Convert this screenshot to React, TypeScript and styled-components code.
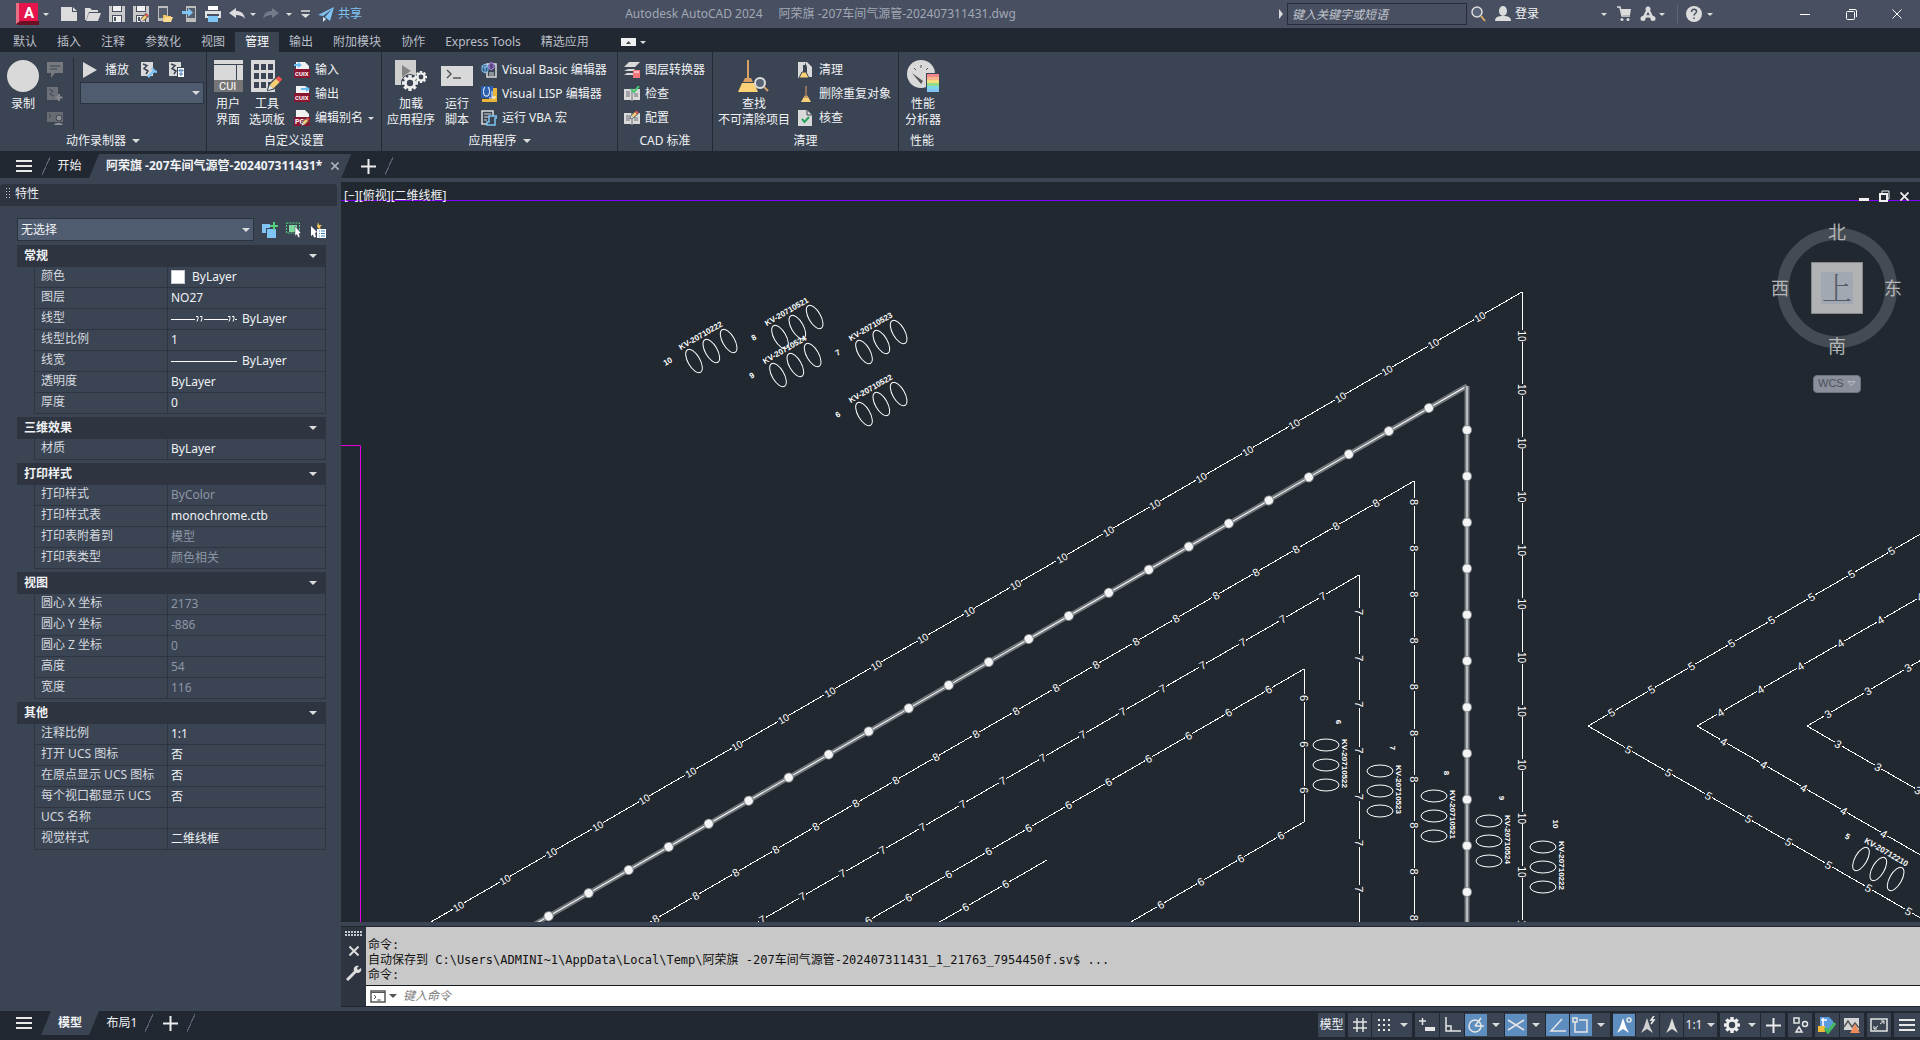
import React, { useState } from "react";
import styled, { createGlobalStyle, css } from "styled-components";

const c = {
  title: "#474f61",
  dark: "#222832",
  canvas: "#212830",
  panel: "#3b4453",
  header: "#2e3440",
  field: "#4f5b6e",
  text: "#f0f2f5",
  dim: "#8d96a5",
  icon: "#dcdcdc",
  active: "#5e8dc0",
  blue: "#7fc4f5",
};

const Global = createGlobalStyle`
  * { box-sizing: border-box; }
  body {
    margin: 0;
    overflow: hidden;
    background: ${c.dark};
    color: ${c.text};
    font: 12px/16px "Noto Sans", "Noto Sans CJK SC", sans-serif;
  }
  button, input, select { font: inherit; color: inherit; }
  button { border: 0; padding: 0; background: none; }
  svg { display: block; flex: none; }
`;

const Screen = styled.div`
  display: flex;
  flex-direction: column;
  height: 100vh;
`;

const Caret = styled.span<{ $size?: number }>`
  flex: none;
  width: 0;
  height: 0;
  border: ${(p) => p.$size ?? 3}px solid transparent;
  border-top-color: ${c.icon};
  border-bottom-width: 0;
`;

/* ---------- title bar ---------- */

const TitleBar = styled.header`
  display: grid;
  grid-template-columns: auto 1fr auto;
  align-items: center;
  height: 28px;
  background: ${c.title};
`;

const QuickAccess = styled.div`
  display: flex;
  align-items: center;
  padding-left: 14px;
`;

const ToolButton = styled.button<{ $w: number }>`
  display: flex;
  align-items: center;
  justify-content: center;
  width: ${(p) => p.$w}px;
  height: 24px;
`;

const ShareButton = styled.button`
  display: flex;
  align-items: center;
  gap: 4px;
  padding-left: 6px;
  color: ${c.blue};
`;

const WindowTitle = styled.h1`
  display: flex;
  justify-content: center;
  gap: 16px;
  margin: 0;
  font-size: 12px;
  font-weight: 400;
  line-height: 16px;
  color: #a2a8b3;
`;

const TitleRight = styled.div`
  display: flex;
  align-items: center;
  justify-content: flex-end;
`;

const Search = styled.input`
  width: 180px;
  height: 22px;
  margin: 0 4px;
  padding: 0 4px;
  border: 1px solid #262c38;
  background: ${c.title};
  font-style: italic;
  &::placeholder { color: #c3c7ce; }
`;

const SignIn = styled.button`
  display: flex;
  align-items: center;
  gap: 4px;
  width: 112px;
  margin-left: 8px;
  & > ${Caret} { margin-left: auto; }
`;

const Rule = styled.span`
  width: 1px;
  height: 18px;
  margin: 0 8px;
  background: #5a657a;
`;

const WindowButtons = styled.div`
  display: flex;
  margin-left: 64px;
`;

/* ---------- ribbon ---------- */

const RibbonTabs = styled.nav`
  display: flex;
  align-items: flex-end;
  height: 24px;
  padding-left: 3px;
  background: ${c.dark};
`;

const RibbonTab = styled.button<{ $on?: boolean }>`
  height: 20px;
  padding: 0 10px;
  color: ${(p) => (p.$on ? "#fff" : "#b9bec7")};
  background: ${(p) => (p.$on ? c.panel : "none")};
`;

const RibbonToggle = styled.button`
  display: flex;
  align-items: center;
  gap: 4px;
  height: 20px;
  margin-left: 22px;
`;

const Ribbon = styled.div`
  display: flex;
  height: 99px;
  background: ${c.panel};
`;

const Panel = styled.section<{ $w: number }>`
  display: flex;
  flex-direction: column;
  flex: none;
  width: ${(p) => p.$w}px;
  border-right: 1px solid #232a36;
  &:last-child { border-right: 0; }
`;

const PanelBody = styled.div`
  display: flex;
  flex: 1;
  padding: 6px 2px 0 5px;
`;

const PanelTitle = styled.h2`
  display: flex;
  align-items: center;
  justify-content: center;
  gap: 6px;
  height: 19px;
  margin: 0;
  padding-bottom: 2px;
  font-size: 12px;
  font-weight: 400;
`;

const BigButton = styled.button<{ $w: number }>`
  display: flex;
  flex-direction: column;
  align-items: center;
  flex: none;
  width: ${(p) => p.$w}px;
  height: 74px;
  padding-top: 2px;
  line-height: 16px;
  white-space: pre-line;
  & > svg { margin-bottom: 4px; }
`;

const Stack = styled.div<{ $left?: number }>`
  display: flex;
  flex-direction: column;
  margin-left: ${(p) => p.$left ?? 0}px;
`;

const RowButton = styled.button<{ $gap?: number }>`
  display: flex;
  align-items: center;
  gap: ${(p) => p.$gap ?? 5}px;
  height: 24px;
  white-space: nowrap;
`;

const RecorderSide = styled.div`
  display: flex;
  flex-direction: column;
  flex: 1;
  margin-left: 10px;
  padding-left: 6px;
  border-left: 1px solid #262d39;
  height: 72px;
`;

const RecorderTools = styled.div`
  display: flex;
  align-items: center;
  gap: 12px;
  padding-left: 3px;
`;

const SelectBox = styled.label<{ $h: number }>`
  display: grid;
  grid-template-columns: 1fr auto;
  align-items: center;
  height: ${(p) => p.$h}px;
  border: 1px solid #2b3240;
  background: ${c.field};
  & > select {
    grid-area: 1 / 1 / 2 / 3;
    width: 100%;
    height: 100%;
    padding: 0 3px;
    border: 0;
    appearance: none;
    background: none;
  }
  & > ${Caret} {
    grid-area: 1 / 2;
    margin-right: 3px;
    pointer-events: none;
  }
`;

/* ---------- document tabs ---------- */

const TabStrip = styled.nav`
  display: flex;
  align-items: center;
  background: ${c.dark};
`;

const DocumentTabs = styled(TabStrip)`
  height: 27px;
  padding-top: 3px;
`;

const LayoutTabs = styled(TabStrip)`
  align-self: flex-start;
`;

const StripButton = styled.button<{ $w: number }>`
  display: flex;
  align-items: center;
  justify-content: center;
  width: ${(p) => p.$w}px;
  height: 24px;
`;

const MenuButton = styled(StripButton)`
  padding-left: 6px;
`;

const Slash = styled.span`
  width: 8px;
  height: 18px;
  background: linear-gradient(to bottom right, transparent 46%, #56606f 46%, #56606f 54%, transparent 54%);
`;

const ActiveTab = styled.div<{ $pad: string }>`
  display: flex;
  align-items: center;
  gap: 9px;
  height: 24px;
  padding: ${(p) => p.$pad};
  background: ${c.panel};
  clip-path: polygon(10px 0, 100% 0, calc(100% - 10px) 100%, 0 100%);
  font-weight: 700;
  white-space: nowrap;
`;

/* ---------- work area ---------- */

const Work = styled.main`
  display: grid;
  grid-template-columns: 337px 1fr;
  column-gap: 4px;
  flex: 1;
  min-height: 0;
  padding: 4px 0;
  background: ${c.panel};
`;

const Palette = styled.aside`
  padding-top: 2px;
`;

const PaletteTitle = styled.h2`
  display: flex;
  align-items: center;
  gap: 3px;
  height: 22px;
  margin: 0 0 12px;
  padding: 0 0 2px 6px;
  border-radius: 4px 4px 0 0;
  background: ${c.header};
  font-size: 12px;
  font-weight: 400;
`;

const SelectionBar = styled.div`
  display: grid;
  grid-template-columns: 1fr auto auto auto;
  align-items: center;
  column-gap: 8px;
  margin: 0 11px 4px 17px;
`;

const Group = styled.section`
  margin: 0 11px 3px 17px;
`;

const GroupHead = styled.button`
  display: flex;
  align-items: center;
  justify-content: space-between;
  width: 100%;
  height: 22px;
  padding: 0 9px 1px 7px;
  background: ${c.header};
  font-weight: 700;
`;

const PropTable = styled.table`
  width: calc(100% - 17px);
  margin-left: 17px;
  table-layout: fixed;
  border-spacing: 0;
  border-left: 1px solid ${c.header};
  border-right: 1px solid ${c.header};
  th, td {
    height: 21px;
    padding: 0;
    border-bottom: 1px solid ${c.header};
    font-weight: 400;
    text-align: left;
    white-space: nowrap;
  }
  th {
    width: 133px;
    padding: 0 0 3px 6px;
    border-right: 1px solid ${c.header};
    color: #d5d9df;
  }
`;

const Value = styled.td<{ $dim?: boolean }>`
  color: ${(p) => (p.$dim ? c.dim : c.text)};
  && { padding-left: 3px; }
`;

const Sample = styled.span`
  display: flex;
  align-items: center;
  gap: 5px;
`;

const Swatch = styled.span`
  width: 14px;
  height: 14px;
  margin-right: 2px;
  border: 1px solid #c9ccd1;
  background: #fff;
`;

const Right = styled.div`
  display: flex;
  flex-direction: column;
  gap: 4px;
  min-width: 0;
  min-height: 0;
`;

const Canvas = styled.section`
  position: relative;
  flex: 1;
  min-height: 0;
  overflow: hidden;
  background: ${c.canvas};
`;

const Drawing = styled.svg`
  position: absolute;
  inset: 0;
  width: 100%;
  height: 100%;
`;

const ViewBar = styled.div`
  position: relative;
  display: flex;
  justify-content: space-between;
  align-items: center;
  padding: 2px 10px 0 3px;
`;

const ViewButtons = styled.div`
  display: flex;
  gap: 8px;
`;

const Compass = styled.div`
  position: absolute;
  top: 36px;
  right: 16px;
  display: flex;
  flex-direction: column;
  align-items: center;
  gap: 17px;
`;

const Wcs = styled.button`
  display: flex;
  align-items: center;
  justify-content: space-between;
  width: 48px;
  height: 18px;
  padding: 0 4px 2px 4px;
  border: 1px solid #6d7280;
  border-radius: 4px;
  background: #8b8f9c;
  color: #4c505b;
  font: 11px/14px "Liberation Sans", sans-serif;
`;

const Command = styled.section`
  display: grid;
  grid-template-columns: 25px 1fr;
  border-top: 1px solid #20262f;
  border-bottom: 1px solid #20262f;
  background: ${c.header};
  font-family: "DejaVu Sans Mono", "Noto Sans CJK SC", monospace;
`;

const CommandSide = styled.div`
  display: flex;
  flex-direction: column;
  align-items: center;
  gap: 9px;
  padding-top: 4px;
  line-height: 10px;
`;

const History = styled.div`
  height: 59px;
  padding: 11px 2px 0;
  border-bottom: 1px solid #15181d;
  background: #c8c8c8;
  color: #111;
  line-height: 15px;
  white-space: pre;
`;

const Prompt = styled.label`
  display: flex;
  align-items: center;
  gap: 3px;
  height: 20px;
  padding-left: 4px;
  background: #fff;
  & > input {
    flex: 1;
    height: 18px;
    padding: 0 3px;
    border: 0;
    outline: 0;
    background: none;
    color: #222;
    font-style: italic;
  }
  & > input::placeholder { color: #7b7b7b; }
  & > ${Caret} { border-top-color: #555; }
`;

/* ---------- status bar ---------- */

const Status = styled.footer`
  display: flex;
  justify-content: space-between;
  height: 29px;
  background: ${c.dark};
`;

const StatusTools = styled.div`
  display: flex;
  align-items: flex-start;
  gap: 3px;
  padding-top: 2px;
`;

const ToolGroup = styled.div`
  display: flex;
  gap: 1px;
`;

const Split = styled.span`
  display: flex;
  background: ${c.panel};
`;

const StatusButton = styled.button<{ $w: number; $on?: boolean }>`
  display: flex;
  align-items: center;
  justify-content: center;
  gap: 5px;
  width: ${(p) => p.$w}px;
  height: 24px;
  background: ${c.panel};
  ${(p) =>
    p.$on &&
    css`
      height: 22px;
      margin: 1px 0;
      background: ${c.active};
    `}
`;

/* ---------- icons ---------- */

type IconProps = { w?: number; h?: number; box?: string; children: React.ReactNode };
const Icon = ({ w = 16, h = 16, box, children }: IconProps) => (
  <svg width={w} height={h} viewBox={box ?? `0 0 ${w} ${h}`} fill="none" aria-hidden="true">
    {children}
  </svg>
);

const Pencil = ({ x, y, s = 1 }: { x: number; y: number; s?: number }) => (
  <g transform={`translate(${x} ${y}) scale(${s})`}>
    <path d="M0 8 1 5 6 0 9 3 4 8 0 9Z" fill={c.panel} />
    <path d="M1.5 5.5 5 2 7 4 3.500 7.500Z" fill="#f7cf72" />
    <path d="M5 2 6.500.5 8.500 2.500 7 4Z" fill="#f0524f" />
    <path d="M.5 8.500 1.500 5.500 3.500 7.500Z" fill="#e8e8e8" />
  </g>
);

const Logo = () => (
  <Icon w={24} h={24}>
    <path d="M1 1h4v21H1z" fill="#e87084" />
    <path d="M1 22 5 19h19v4H3z" fill="#6c0f24" />
    <path d="M4 1h19v18H4z" fill="#e5144c" />
    <text x="9" y="16" fill="#fff" fontSize="15" fontWeight="700" fontFamily="Roboto, sans-serif">A</text>
  </Icon>
);
const NewIcon = () => <Icon w={18}><path d="M1 1h11v5h5v9H1z" fill={c.icon} /><path d="m13 1 4 4h-4z" fill={c.icon} /></Icon>;
const OpenIcon = () => <Icon><path d="M0 14V2h5l2 2h6v2H4L1 14z" fill={c.icon} /><path d="M4 7h12l-3 8H1z" fill={c.icon} /></Icon>;
const SaveIcon = ({ edit }: { edit?: boolean }) => (
  <Icon>
    <path d="M0 0h16v16H0z" fill="#c9c9c9" />
    <path d="M3 0h10v6H3zM3 9h10v7H3z" fill={c.title} />
    <path d="M4 0h8v5H4zM4 10h8v6H4z" fill="#f0f0f0" />
    <path d="M5 11h2v4H5z" fill={c.title} />
    {edit && <Pencil x={7} y={7} />}
  </Icon>
);
const WebOpenIcon = () => (
  <Icon><path d="M1 0h10v15H1z" fill="#bdbdbd" /><path d="M2 2h8v10H2z" fill="#555d6d" /><path d="M6 9h3l1 1h4v5H6z" fill="#f3c45f" /><path d="M8 11h8l-2 5H6z" fill="#fbdc92" /></Icon>
);
const WebSaveIcon = () => (
  <Icon><path d="M5 0h10v16H5z" fill="#bdbdbd" /><path d="M6 2h8v10H6z" fill="#555d6d" /><path d="M1 5h6V2l5 4.500L7 11V8H1z" fill={c.blue} /></Icon>
);
const PrintIcon = () => (
  <Icon><path d="M3 0h10v4H3z" fill="#fff" /><path d="M0 5h16v7H0z" fill="#e1e1e1" /><path d="M2 8h12v2H2z" fill={c.title} /><path d="M3 10h10v6H3z" fill={c.blue} /></Icon>
);
const UndoIcon = ({ flip, tone = c.icon }: { flip?: boolean; tone?: string }) => (
  <Icon>
    <path transform={flip ? "translate(16 0) scale(-1 1)" : undefined} d="M0 7 7 2v3c5 0 8 2 9 8-2-3-5-4-9-4v3z" fill={tone} />
  </Icon>
);
const PlaneIcon = () => <Icon><path d="M0 9 16 1 12 15 7 11 14 3 5 10z" fill={c.blue} /><path d="m5 11 3 2-3 3z" fill="#d5ecfb" /></Icon>;
const SearchIcon = () => <Icon><circle cx="6" cy="6" r="5" fill="#5a6478" stroke={c.icon} strokeWidth="1.500" /><path d="m10 10 4 5" stroke="#dfa862" strokeWidth="2" /></Icon>;
const UserIcon = () => <Icon><ellipse cx="8" cy="5" rx="4" ry="5" fill={c.icon} /><path d="M0 15c0-4 3-5 8-5s8 1 8 5z" fill={c.icon} /></Icon>;
const CartIcon = () => <Icon w={14}><path d="M0 1h3l2 9h8" stroke={c.icon} strokeWidth="1.500" /><path d="M4 3h10l-1 6H5z" fill={c.icon} /><circle cx="5" cy="13.500" r="1.500" fill={c.icon} /><circle cx="11" cy="13.500" r="1.500" fill={c.icon} /></Icon>;
const StoreIcon = () => <Icon><path d="M3 13 8 3l5 10M3 12c3-2 7-2 10 0" stroke={c.icon} strokeWidth="2.500" /><circle cx="8" cy="3" r="2.500" fill={c.icon} /><circle cx="3" cy="12.500" r="2.500" fill={c.icon} /><circle cx="13" cy="12.500" r="2.500" fill={c.icon} /></Icon>;
const HelpIcon = () => <Icon><circle cx="8" cy="8" r="8" fill={c.icon} /><path d="M5.500 6c0-4 5-3.500 5-.5 0 2-2.500 2-2.500 4M8 11.500v1.500" stroke={c.title} strokeWidth="1.500" /></Icon>;
const Close = ({ s = 10, tone = "#fff", sw = 1 }: { s?: number; tone?: string; sw?: number }) => <Icon w={s} h={s} box="0 0 10 10"><path d="m0.500.5 9 9m0-9-9 9" stroke={tone} strokeWidth={sw} /></Icon>;
const Burger = () => <Icon w={16} h={12}><path d="M0 1h16M0 6h16M0 11h16" stroke="#e8e8e8" strokeWidth="2" /></Icon>;
const Plus = ({ s = 15 }: { s?: number }) => <Icon w={s} h={s} box="0 0 15 15"><path d="M0 7.500h15M7.500 0v15" stroke="#ececec" strokeWidth="2" /></Icon>;

const RecordIcon = () => <Icon w={32} h={32}><circle cx="16" cy="16" r="16" fill="#d9d9d9" /></Icon>;
const NoteIcon = () => <Icon><path d="M0 0h16v11H8l-4 5v-5H0z" fill="#77797e" /><path d="M3 4h10M3 7h7" stroke={c.panel} /></Icon>;
const MacroGhost = () => <Icon><path d="M0 1h11v13H0z" fill="#6d7077" /><path d="m2 3 4 2-3 3 4 2" stroke={c.panel} /><path d="M12 8v7M8.500 11.500h7" stroke="#85888e" strokeWidth="2" /></Icon>;
const PauseGhost = () => <Icon><path d="M0 2h16v10H0z" fill="#686b72" /><path d="m2 4 2 2-2 2" stroke={c.panel} /><circle cx="12" cy="8" r="3" fill="#8a8d92" stroke={c.panel} /><path d="M7 15c1-3 8-3 9 0z" fill="#8a8d92" /></Icon>;
const PlayIcon = () => <Icon w={14}><path d="m0 0 14 8L0 16z" fill="#d9d9d9" /></Icon>;
const MacroIcon = ({ kind }: { kind: "wrench" | "list" }) => (
  <Icon>
    <path d="M0 0h12v14H0z" fill="#d9d9d9" /><path d="m2 2 4 1.500-3 3L7 9l-2 3" stroke={c.panel} strokeWidth="1.500" />
    {kind === "wrench" ? (
      <path d="m7 15 6-6M11 6l2 3 3 1" stroke={c.blue} strokeWidth="2.500" />
    ) : (
      <><path d="M8 5h8v11H8z" fill={c.panel} /><path d="M9 6h6v9H9z" fill="#fff" /><path d="M10 8h4v1h-4zM12 10v4M10 12h4" stroke="#3f79b5" /></>
    )}
  </Icon>
);
const CuiIcon = () => (
  <Icon w={29} h={32}>
    <path d="M0 0h29v4H0zM0 5h22v15H0zM23 5h6v15h-6z" fill="#d9d9d9" /><path d="M0 20h29v12H0z" fill="#767676" />
    <text x="5" y="30" fontSize="11" fill="#fff" fontFamily="Roboto, sans-serif">CUI</text>
  </Icon>
);
const PaletteIcon = () => (
  <Icon w={32} h={32}>
    <path d="M0 0h24v32H0z" fill="#d9d9d9" />
    {[4, 13, 22].map((y) => [3, 10, 17].map((x) => <path key={`${x}${y}`} d={`M${x} ${y}h5v6h-5z`} fill={c.panel} />))}
    <Pencil x={16} y={15} s={1.8} />
  </Icon>
);
const CuixIcon = ({ kind }: { kind: "in" | "out" | "alias" }) => (
  <Icon>
    <path d="M2 0h9l4 4v12H2z" fill="#f1f1f1" /><path d="M0 7h16v9H0z" fill="#8a1530" />
    {kind === "alias" ? (
      <><text x="1" y="14" fontSize="7" fontWeight="700" fill="#fff" fontFamily="Roboto, sans-serif">PGP</text><Pencil x={7} y={7} /></>
    ) : (
      <text x="1" y="14" fontSize="6" fontWeight="700" fill="#fff" fontFamily="Roboto, sans-serif">CUIX</text>
    )}
    {kind === "in" && <path d="M0 2h4V0l4 3-4 3V4H0z" fill="#69bdf5" />}
    {kind === "out" && <path d="M7 2h5V0l4 3-4 3V4H7z" fill="#69bdf5" />}
  </Icon>
);
const Cog = ({ x, y, r, hole = c.panel }: { x: number; y: number; r: number; hole?: string }) => (
  <g transform={`translate(${x} ${y})`}>
    <circle r={r * 0.75} fill="#eee" />
    {[0, 45, 90, 135].map((a) => <path key={a} d={`M0 ${-r}V${r}`} stroke="#eee" strokeWidth={r * 0.42} transform={`rotate(${a})`} />)}
    <circle r={r * 0.4} fill={hole} />
  </g>
);
const LoadIcon = () => <Icon w={32} h={32}><path d="M0 0h21v25H0z" fill="#cfcfcf" /><path d="m7 5 9 6-9 6z" fill="#858585" /><circle cx="15" cy="23" r="9" fill={c.panel} /><Cog x={15} y={23} r={8} /><Cog x={26} y={17} r={6} /></Icon>;
const ScriptIcon = () => <Icon w={32} h={32}><path d="M0 6h32v20H0z" fill="#d9d9d9" /><path d="m6 10 4 4-4 4M12 18h8" stroke="#555" strokeWidth="1.500" /></Icon>;
const VbIcon = () => <Icon><path d="M6 2h9v13H6z" stroke="#ddd" strokeWidth="1.500" /><path d="M8 11h5M8 13h5" stroke="#ddd" /><path d="M1 4l3-2 3 2v5l-3 2-3-2zM4 2v9M1 4l3 2 3-2" stroke={c.blue} fill="#34567c" /><path d="M8 2l2-1.500L13 2v4l-3 2-2-2z" stroke="#b58bea" fill="#5d4a85" /></Icon>;
const LispIcon = () => <Icon><path d="M11 2h5v14H1v-3h10z" fill="#e9b53a" /><path d="M0 0h12v12H0z" fill="#2c5fb0" /><path d="M4 1c-2 2-2 7 0 9M7 1c2 2 2 7 0 9M4 10h3" stroke="#fff" /><path d="M11 5v6M11 11h4M8 12h6" stroke="#fff" /></Icon>;
const VbaIcon = () => <Icon><path d="M1 1h11v13H1z" stroke="#ddd" strokeWidth="1.500" /><path d="M3 4h7M3 7h6M3 10h3" stroke="#ddd" /><path d="M8 6h8v2h-2v7H6v-3h2z" stroke={c.blue} fill={c.panel} strokeWidth="1.500" /></Icon>;
const LayerIcon = () => <Icon><path d="m5 0h11l-5 5H0zM4 7h7l-2 2H0zM3 11h6v2H0z" fill="#d9d9d9" /><path d="M9 8h7v8H9z" fill="#f2777a" /><path d="M10 10h5" stroke="#fff" /></Icon>;
const Book = ({ check }: { check?: boolean }) => (
  <Icon><path d="M0 3h7l1 1 1-1h7v11H9l-1 1-1-1H0z" fill="#d9d9d9" /><path d="M2 6h4M2 8h4M2 10h4M10 8h4M10 10h4M8 4v10" stroke="#6b6f78" />
    {check ? <path d="m7 3 3 3 5-6" stroke="#46c66e" strokeWidth="2" /> : <Pencil x={6} y={0} />}
  </Icon>
);
const Broom = ({ w, h }: { w: number; h: number }) => <Icon w={w} h={h} box="0 0 20 32"><path d="M9 0h2v18H9z" fill="#d9a066" /><path d="M7 19h6l2 4H5z" fill="#d9a066" /><path d="M5 23h10l5 9H0z" fill="#fbd178" /></Icon>;
const FindBroom = () => <Icon w={32} h={32}><path d="M9 0h2v18H9z" fill="#d9a066" /><path d="M7 18h6l2 4H5z" fill="#d9a066" /><path d="M4 23h12l4 9H0z" fill="#fbd178" /><path d="m26 27 4 4" stroke="#d9a066" strokeWidth="2" /><circle cx="22" cy="23" r="5" fill="#5a6478" stroke="#ddd" strokeWidth="2" /></Icon>;
const PurgeIcon = () => <Icon><path d="M0 0h7v16H0zM7 0h2l5 5v10H9V5z" fill="#d9d9d9" /><path d="M5 3h3v7h-3z" fill={c.panel} /><path d="M4 10h4l3 6H1z" fill="#fbd178" stroke={c.panel} /></Icon>;
const AuditIcon = () => <Icon><path d="M0 0h9l5 5v11H0z" fill="#d9d9d9" /><path d="M9 0v5h5" stroke={c.panel} /><path d="m4 9 2.500 3L11 7" stroke="#2ba35a" strokeWidth="2" /></Icon>;
const GaugeIcon = () => (
  <Icon w={32} h={32}>
    <circle cx="14" cy="14" r="14" fill="#d9d9d9" />
    <path d="M14 5v3M7 8l2 2M21 8l-2 2" stroke="#555" /><path d="m5 13 11 8-2 3z" fill="#555" />
    <path d="M19 13h13v19H19z" fill={c.panel} />
    {["#f4878b", "#f8b58a", "#f4dc7c", "#8fdc8a", "#7fd6e8", "#7fc4f5"].map((f, i) => <path key={f} d={`M20 ${14 + i * 3}h12v3H20z`} fill={f} />)}
  </Icon>
);
const Grip = ({ cols, rows }: { cols: number; rows: number }) => (
  <Icon w={cols * 3} h={rows * 3}>
    {Array.from({ length: cols * rows }, (_, i) => <path key={i} d={`M${(i % cols) * 3} ${Math.floor(i / cols) * 3}h${cols > 3 ? 2 : 1}v${cols > 3 ? 2 : 1}h${cols > 3 ? -2 : -1}z`} fill="#c5c9d0" />)}
  </Icon>
);
const AddSelIcon = () => <Icon><path d="M0 2h8v9H0z" fill={c.blue} /><path d="M4 6h10v10H4z" fill={c.panel} /><path d="M5 7h9v9H5z" fill={c.blue} /><path d="M12 0v8M8 4h8" stroke="#52d07c" strokeWidth="2" /></Icon>;
const PickIcon = () => <Icon><path d="M.5 1h13v10H.5z" stroke="#52d07c" strokeDasharray="2 1" /><path d="M3 3h8v7H3z" fill="#7ddba0" /><path d="m9 4 6 7-2 .5 1 3.500-2 .5-1-3-2 1.500z" fill="#fff" stroke={c.panel} strokeWidth=".5" /></Icon>;
const QuickSelIcon = () => <Icon><path d="m8 0 1 3h3l-2 2 1 3-4-3z" fill="#f6c65b" /><path d="m1 4 6 6-2 1 1 4-2 .5-1-3-2 1.500z" fill="#fff" /><path d="M7 7h9v9H7z" fill="#fff" /><path d="M9 9h1m1 0h4M9 11.500h1m1 0h4M9 14h1m1 0h4" stroke="#3682c4" /></Icon>;
const WrenchIcon = () => <Icon><path d="m1 15 9-9" stroke="#ddd" strokeWidth="3" /><path d="M15 3 12 5 11 3l2-2c-4-1-6 2-5 5l3 2c3 0 5-2 4-5z" fill="#ddd" /></Icon>;
const PromptIcon = () => <Icon w={16} h={13}><path d="M1 1h14v11H1z" stroke="#555" strokeWidth="1.500" /><path d="M1 2.500h14" stroke="#555" /><path d="m4 5 2 2-2 2M7 10h4" stroke="#555" /></Icon>;

const S = ({ children }: { children: React.ReactNode }) => (
  <svg width={18} height={18} viewBox="0 0 18 18" fill="none" stroke="#e6e6e6" strokeWidth="1.500" aria-hidden="true">{children}</svg>
);
const statusIcon: Record<string, React.ReactNode> = {
  grid: <S><path d="M6 2v14M12 2v14M2 6h14M2 12h14" /></S>,
  snap: <S><path d="M3 4h12M3 9h12M3 14h12" strokeDasharray="2 3" strokeWidth="2" /></S>,
  input: <S><path d="M1 5h7M4.500 2v7" /><path d="M7 11h10v4H7z" fill="#e6e6e6" stroke="none" /></S>,
  ortho: <S><path d="M3 1v14h15M3 10h5v5" /></S>,
  polar: <S><circle cx="8" cy="10" r="6" /><path d="M8 10h9M8 10l6-8" /></S>,
  iso: <S><path d="m1 4 16 10M1 14 17 4" /></S>,
  track: <S><path d="M17 15H2L13 3" /></S>,
  osnap: <S><path d="M3 6v10h12V4H7" /><path d="M1 2h4v4H1z" /></S>,
  anno: <S><path d="m8 2 3 9 3 6-6-4-6 4 3-6z" fill="#fff" stroke="none" /><circle cx="14" cy="4" r="2" /></S>,
  auto: <S><path d="m8 2 3 9 3 6-6-4-6 4 3-6z" fill="#cfcfcf" stroke="none" /><path d="m15 0-3 4h3l-3 4" stroke="#eee" /></S>,
  person: <S><path d="m9 2 3 9 3 6-6-4-6 4 3-6z" fill="#dcdcdc" stroke="none" /></S>,
  shapes: <S><path d="M3 2h5v5H3z" /><circle cx="14" cy="8" r="2.500" /><path d="m8 11 3 5H5z" /></S>,
  monitor: <S><path d="M2 1h9l4 4v8H2z" fill="#5d9be0" stroke="none" /><path d="M3 4h6M5 2v8" stroke="#fff" /><path d="M0 10h7v6H0z" fill="#f2b93b" stroke="none" /><path d="m7 12 3 4 7-9" stroke="#43b85f" strokeWidth="3" /></S>,
  graph: <S><path d="M1 2h15v12H1z" fill="#d5d5d5" stroke="none" /><path d="m1 11 4-6 4 6 3-4 4 5" stroke="#555" /><path d="m12 8 5 9H7z" fill="#ee8d5b" stroke="none" /></S>,
  full: <S><path d="M1 3h16v12H1z" /><path d="m10 8 4-3M14 8V5h-3M8 10l-4 3M4 10v3h3" strokeWidth="1" /></S>,
  gear: <Icon w={18} h={18}><Cog x={9} y={9} r={8} /></Icon>,
  plus: <Plus />,
  burger: <Burger />,
};

/* ---------- drawing data ---------- */

type Pt = [number, number];

const RUN_STEP = 46.2;
const STROKE_FONT = '"Liberation Sans Narrow", "Liberation Sans", sans-serif';

/** A pipe run: a straight line interrupted by its size label at a fixed step. */
function Run({ from, angle, length, first, label, step = RUN_STEP, flip = 0 }: {
  from: Pt; angle: number; length: number; first: number; label: string; step?: number; flip?: number;
}) {
  const half = label.length > 1 ? 6 : 4;
  const marks: number[] = [];
  for (let d = first; d < length; d += step) marks.push(d);
  const stops = [-half, ...marks, length + half];
  return (
    <g transform={`translate(${from[0]} ${from[1]}) rotate(${angle})`}>
      {stops.slice(1).map((d, i) => (
        <line key={d} x1={stops[i] + half} x2={d - half} y1={0} y2={0} shapeRendering="crispEdges" />
      ))}
      {marks.map((d) => (
        <text key={d} transform={`translate(${d} 0) rotate(${flip})`} y={4} textAnchor="middle" fontSize={label.length > 1 ? 10 : 11} stroke="none">{label}</text>
      ))}
    </g>
  );
}

/** The picked run is drawn with a halo and a grip at each label. */
function PickedRun({ from, angle, length, first }: { from: Pt; angle: number; length: number; first: number }) {
  const marks: number[] = [];
  for (let d = first; d < length + 4; d += RUN_STEP) marks.push(d);
  return (
    <g transform={`translate(${from[0]} ${from[1]}) rotate(${angle})`}>
      <line x1={0} x2={length} y1={0} y2={0} stroke="#73787d" strokeWidth={5} />
      <line x1={0} x2={length} y1={0} y2={0} stroke="#fff" strokeWidth={1} />
      {marks.map((d) => (
        <g key={d} stroke="none">
          <circle cx={d} cy={0} r={5} fill="#8b9095" />
          <circle cx={d} cy={0} r={4} fill="#f4f4f4" />
        </g>
      ))}
    </g>
  );
}

/** Valve block: tag number, code, and three cylinders. */
function Valve({ at, angle, tag, code }: { at: Pt; angle: number; tag: string; code: string }) {
  return (
    <g transform={`translate(${at[0]} ${at[1]}) rotate(${angle})`}>
      {[0, 20, 40].map((x) => <ellipse key={x} cx={x} cy={0} rx={6} ry={13} />)}
      <g stroke="none" fill="#fff" fontSize={8} fontWeight={700}>
        <text x={-6} y={-16}>{code}</text>
        <text x={-23} y={-10} textAnchor="middle">{tag}</text>
      </g>
    </g>
  );
}

const valves: { at: Pt; angle: number; tag: string; code: string }[] = [
  { at: [694, 361], angle: -30, tag: "10", code: "KV-20710222" },
  { at: [780, 337], angle: -30, tag: "8", code: "KV-20710521" },
  { at: [778, 375], angle: -30, tag: "9", code: "KV-20710524" },
  { at: [864, 352], angle: -30, tag: "7", code: "KV-20710523" },
  { at: [864, 414], angle: -30, tag: "6", code: "KV-20710522" },
  { at: [1326, 745], angle: 90, tag: "6", code: "KV-20710522" },
  { at: [1380, 771], angle: 90, tag: "7", code: "KV-20710523" },
  { at: [1434, 796], angle: 90, tag: "8", code: "KV-20710521" },
  { at: [1489, 821], angle: 90, tag: "9", code: "KV-20710524" },
  { at: [1543, 847], angle: 90, tag: "10", code: "KV-20710222" },
  { at: [1861, 859], angle: 30, tag: "5", code: "KV-20712210" },
];

const runs: React.ComponentProps<typeof Run>[] = [
  { from: [1522, 292], angle: 150, length: 1260, first: 49, label: "10", step: 53.6, flip: 180 },
  { from: [1522, 292], angle: 90, length: 640, first: 44, label: "10", step: 53.6 },
  { from: [1414, 481], angle: 150, length: 890, first: 44, label: "8", flip: 180 },
  { from: [1414, 481], angle: 90, length: 450, first: 21, label: "8" },
  { from: [1359, 575], angle: 150, length: 710, first: 42, label: "7", flip: 180 },
  { from: [1359, 575], angle: 90, length: 360, first: 37, label: "7" },
  { from: [1304, 669], angle: 150, length: 520, first: 41, label: "6", flip: 180 },
  { from: [1304, 669], angle: 90, length: 153, first: 29, label: "6" },
  { from: [1304, 822], angle: 150, length: 210, first: 27, label: "6", flip: 180 },
  { from: [1047, 860], angle: 150, length: 140, first: 48, label: "6", flip: 180 },
  { from: [1588, 726], angle: -30, length: 400, first: 27, label: "5" },
  { from: [1588, 726], angle: 30, length: 400, first: 47, label: "5" },
  { from: [1697, 726], angle: -30, length: 270, first: 27, label: "4" },
  { from: [1697, 726], angle: 30, length: 270, first: 31, label: "4" },
  { from: [1807, 726], angle: -30, length: 140, first: 24, label: "3" },
  { from: [1807, 726], angle: 30, length: 140, first: 36, label: "3" },
];

const Plan = () => (
  <Drawing role="img" aria-label="管线平面图">
    <g transform="translate(-341 -182)" stroke="#fff" fill="none" fontFamily={STROKE_FONT}>
      <path d="M341 200.500H4000" stroke="#7f00ff" />
      <path d="M341 445.500H360.500V1400" stroke="#e000e0" />
      <g fill="#fff">
        {runs.map((r, i) => <Run key={i} {...r} />)}
      </g>
      <PickedRun from={[1467, 386]} angle={150} length={1085} first={44} />
      <PickedRun from={[1467, 386]} angle={90} length={550} first={44} />
      {valves.map((v, i) => <Valve key={i} {...v} />)}
    </g>
  </Drawing>
);

/* ---------- property data ---------- */

type Row = { name: string; value?: React.ReactNode; dim?: boolean };

const groups: { name: string; rows: Row[] }[] = [
  {
    name: "常规",
    rows: [
      { name: "颜色", value: <Sample><Swatch />ByLayer</Sample> },
      { name: "图层", value: "NO27" },
      {
        name: "线型",
        value: (
          <Sample>
            <Icon w={66} h={9}><path d="M0 4.500h24M33 4.500h24M64 4.500h2" stroke="#fff" /><path d="M25 1.500h2v2l-1 3M29 1.500h2v2l-1 3M57 1.500h2v2l-1 3M61 1.500h2v2l-1 3" stroke="#fff" /></Icon>
            ByLayer
          </Sample>
        ),
      },
      { name: "线型比例", value: "1" },
      { name: "线宽", value: <Sample><Icon w={66} h={3}><path d="M0 1.500h66" stroke="#fff" /></Icon>ByLayer</Sample> },
      { name: "透明度", value: "ByLayer" },
      { name: "厚度", value: "0" },
    ],
  },
  { name: "三维效果", rows: [{ name: "材质", value: "ByLayer" }] },
  {
    name: "打印样式",
    rows: [
      { name: "打印样式", value: "ByColor", dim: true },
      { name: "打印样式表", value: "monochrome.ctb" },
      { name: "打印表附着到", value: "模型", dim: true },
      { name: "打印表类型", value: "颜色相关", dim: true },
    ],
  },
  {
    name: "视图",
    rows: [
      { name: "圆心 X 坐标", value: "2173", dim: true },
      { name: "圆心 Y 坐标", value: "-886", dim: true },
      { name: "圆心 Z 坐标", value: "0", dim: true },
      { name: "高度", value: "54", dim: true },
      { name: "宽度", value: "116", dim: true },
    ],
  },
  {
    name: "其他",
    rows: [
      { name: "注释比例", value: "1:1" },
      { name: "打开 UCS 图标", value: "否" },
      { name: "在原点显示 UCS 图标", value: "否" },
      { name: "每个视口都显示 UCS", value: "否" },
      { name: "UCS 名称" },
      { name: "视觉样式", value: "二维线框" },
    ],
  },
];

type Tool = { id: string; label: string; w: number; on?: boolean; menu?: number };
const statusGroups: Tool[][] = [
  [{ id: "grid", label: "栅格", w: 23 }, { id: "snap", label: "捕捉", w: 24, menu: 16 }],
  [
    { id: "input", label: "动态输入", w: 24 },
    { id: "ortho", label: "正交", w: 24 },
    { id: "polar", label: "极轴追踪", w: 22, on: true, menu: 17 },
    { id: "iso", label: "等轴测草图", w: 22, on: true, menu: 18 },
    { id: "track", label: "对象捕捉追踪", w: 23, on: true },
    { id: "osnap", label: "对象捕捉", w: 22, on: true, menu: 18 },
  ],
];

const tabs = ["默认", "插入", "注释", "参数化", "视图", "管理", "输出", "附加模块", "协作", "Express Tools", "精选应用"];

function StatusTool({ id, label, w, on, menu }: Tool) {
  return (
    <Split>
      <StatusButton $w={w} $on={on} aria-label={label}>{statusIcon[id]}</StatusButton>
      {menu && <StatusButton $w={menu} aria-label={`${label}选项`}><Caret $size={4} /></StatusButton>}
    </Split>
  );
}

function PropGroup({ name, rows }: { name: string; rows: Row[] }) {
  const [open, setOpen] = useState(true);
  return (
    <Group>
      <GroupHead aria-expanded={open} onClick={() => setOpen(!open)}>
        {name}
        <Caret $size={4} />
      </GroupHead>
      {open && (
        <PropTable>
          <tbody>
            {rows.map((r) => (
              <tr key={r.name}>
                <th scope="row">{r.name}</th>
                <Value $dim={r.dim}>{r.value}</Value>
              </tr>
            ))}
          </tbody>
        </PropTable>
      )}
    </Group>
  );
}

function Title() {
  return (
    <TitleBar>
      <QuickAccess>
        <ToolButton $w={26} aria-label="应用程序菜单"><Logo /></ToolButton>
        <ToolButton $w={12} aria-label="更多"><Caret /></ToolButton>
        <ToolButton $w={34} aria-label="新建"><NewIcon /></ToolButton>
        <ToolButton $w={14} aria-label="打开"><OpenIcon /></ToolButton>
        <ToolButton $w={34} aria-label="保存"><SaveIcon /></ToolButton>
        <ToolButton $w={14} aria-label="另存为"><SaveIcon edit /></ToolButton>
        <ToolButton $w={34} aria-label="从 Web 打开"><WebOpenIcon /></ToolButton>
        <ToolButton $w={14} aria-label="保存到 Web"><WebSaveIcon /></ToolButton>
        <ToolButton $w={34} aria-label="打印"><PrintIcon /></ToolButton>
        <ToolButton $w={14} aria-label="放弃"><UndoIcon /></ToolButton>
        <ToolButton $w={18} aria-label="放弃列表"><Caret /></ToolButton>
        <ToolButton $w={18} aria-label="重做"><UndoIcon flip tone="#747b88" /></ToolButton>
        <ToolButton $w={18} aria-label="重做列表"><Caret /></ToolButton>
        <ToolButton $w={14} aria-label="自定义"><Icon w={9} h={8}><path d="M0 1h9" stroke={c.icon} strokeWidth="1.500" /><path d="M0 4h9L4.500 8z" fill={c.icon} /></Icon></ToolButton>
        <ShareButton><PlaneIcon />共享</ShareButton>
      </QuickAccess>
      <WindowTitle><span>Autodesk AutoCAD 2024</span><span>阿荣旗 -207车间气源管-202407311431.dwg</span></WindowTitle>
      <TitleRight>
        <Icon w={4} h={10}><path d="m0 0 4 5-4 5z" fill={c.icon} /></Icon>
        <Search placeholder="键入关键字或短语" aria-label="搜索" />
        <ToolButton $w={16} aria-label="查找"><SearchIcon /></ToolButton>
        <SignIn><UserIcon />登录<Caret /></SignIn>
        <ToolButton $w={34} aria-label="购物车"><CartIcon /></ToolButton>
        <ToolButton $w={14} aria-label="应用商店"><StoreIcon /></ToolButton>
        <ToolButton $w={14} aria-label="商店菜单"><Caret /></ToolButton>
        <Rule />
        <ToolButton $w={16} aria-label="帮助"><HelpIcon /></ToolButton>
        <ToolButton $w={16} aria-label="帮助菜单"><Caret /></ToolButton>
        <WindowButtons>
          <ToolButton $w={46} aria-label="最小化"><Icon w={10} h={10}><path d="M0 5.500h10" stroke="#fff" /></Icon></ToolButton>
          <ToolButton $w={46} aria-label="还原"><Icon w={11} h={11}><rect x=".5" y="2.500" width="8" height="8" rx="1" stroke="#fff" /><path d="M3 .5h6q1.500 0 1.500 1.500v6" stroke="#fff" /></Icon></ToolButton>
          <ToolButton $w={46} aria-label="关闭"><Close /></ToolButton>
        </WindowButtons>
      </TitleRight>
    </TitleBar>
  );
}

function RibbonPanels() {
  return (
    <Ribbon>
      <Panel $w={207}>
        <PanelBody>
          <BigButton $w={36}><RecordIcon />录制</BigButton>
          <Stack $left={6}>
            <RowButton aria-label="插入消息"><NoteIcon /></RowButton>
            <RowButton aria-label="插入基点"><MacroGhost /></RowButton>
            <RowButton aria-label="暂停以请求输入"><PauseGhost /></RowButton>
          </Stack>
          <RecorderSide>
            <RecorderTools>
              <RowButton $gap={8}><PlayIcon />播放</RowButton>
              <RowButton aria-label="首选项"><MacroIcon kind="wrench" /></RowButton>
              <RowButton aria-label="管理动作宏"><MacroIcon kind="list" /></RowButton>
            </RecorderTools>
            <SelectBox $h={22}>
              <select aria-label="可用动作宏"><option></option></select>
              <Caret $size={4} />
            </SelectBox>
          </RecorderSide>
        </PanelBody>
        <PanelTitle>动作录制器<Caret $size={4} /></PanelTitle>
      </Panel>

      <Panel $w={175}>
        <PanelBody>
          <BigButton $w={32}><CuiIcon />{"用户\n界面"}</BigButton>
          <BigButton $w={46}><PaletteIcon />{"工具\n选项板"}</BigButton>
          <Stack $left={4}>
            <RowButton><CuixIcon kind="in" />输入</RowButton>
            <RowButton><CuixIcon kind="out" />输出</RowButton>
            <RowButton><CuixIcon kind="alias" />编辑别名<Caret /></RowButton>
          </Stack>
        </PanelBody>
        <PanelTitle>自定义设置</PanelTitle>
      </Panel>

      <Panel $w={236}>
        <PanelBody>
          <BigButton $w={48}><LoadIcon />{"加载\n应用程序"}</BigButton>
          <BigButton $w={44}><ScriptIcon />{"运行\n脚本"}</BigButton>
          <Stack $left={2}>
            <RowButton><VbIcon />Visual Basic 编辑器</RowButton>
            <RowButton><LispIcon />Visual LISP 编辑器</RowButton>
            <RowButton><VbaIcon />运行 VBA 宏</RowButton>
          </Stack>
        </PanelBody>
        <PanelTitle>应用程序<Caret $size={4} /></PanelTitle>
      </Panel>

      <Panel $w={95}>
        <PanelBody>
          <Stack $left={1}>
            <RowButton><LayerIcon />图层转换器</RowButton>
            <RowButton><Book check />检查</RowButton>
            <RowButton><Book />配置</RowButton>
          </Stack>
        </PanelBody>
        <PanelTitle>CAD 标准</PanelTitle>
      </Panel>

      <Panel $w={186}>
        <PanelBody>
          <BigButton $w={72}><FindBroom />{"查找\n不可清除项目"}</BigButton>
          <Stack $left={8}>
            <RowButton><PurgeIcon />清理</RowButton>
            <RowButton><Broom w={16} h={16} />删除重复对象</RowButton>
            <RowButton><AuditIcon />核查</RowButton>
          </Stack>
        </PanelBody>
        <PanelTitle>清理</PanelTitle>
      </Panel>

      <Panel $w={46}>
        <PanelBody>
          <BigButton $w={38}><GaugeIcon />{"性能\n分析器"}</BigButton>
        </PanelBody>
        <PanelTitle>性能</PanelTitle>
      </Panel>
    </Ribbon>
  );
}

function ViewCube() {
  const points: [string, number, number][] = [["北", 67, 14], ["南", 67, 128], ["西", 10, 70], ["东", 123, 70]];
  return (
    <Compass>
      <svg width={134} height={140} role="img" aria-label="ViewCube">
        <circle cx={67} cy={70} r={54} fill="none" stroke="#454b52" strokeWidth={12} />
        <rect x={41.500} y={44.500} width={51} height={51} fill="#b0b2b4" stroke="#85888b" />
        <rect x={51} y={54} width={32} height={32} fill="#a2a8b2" />
        <g fontFamily='"Noto Sans CJK SC", sans-serif' fontSize={18} fill="#b4b6b8" textAnchor="middle">
          {points.map(([t, x, y]) => <text key={t} x={x} y={y + 7}>{t}</text>)}
          <text x={67} y={81} fontSize={30} fill="#555b66" fontFamily='"Noto Serif CJK SC", "Noto Sans CJK SC", serif' fontWeight={300}>上</text>
        </g>
      </svg>
      <Wcs>WCS<Icon w={9} h={5}><path d="M1 .5h7L4.500 4.500z" stroke="#b9bcc6" /></Icon></Wcs>
    </Compass>
  );
}

export default function App() {
  return (
    <Screen>
      <Global />
      <Title />
      <RibbonTabs>
        {tabs.map((t) => <RibbonTab key={t} $on={t === "管理"}>{t}</RibbonTab>)}
        <RibbonToggle aria-label="最小化功能区">
          <Icon w={15} h={8}><path d="M0 0h15v8H0z" fill="#f0f0f0" /><path d="M5 6l2.500-3L10 6z" fill="#444" /></Icon>
          <Caret />
        </RibbonToggle>
      </RibbonTabs>
      <RibbonPanels />

      <DocumentTabs>
        <MenuButton $w={42} aria-label="文件选项卡菜单"><Burger /></MenuButton>
        <Slash />
        <StripButton $w={39}>开始</StripButton>
        <ActiveTab $pad="0 12px 0 17px">
          <span>阿荣旗 -207车间气源管-202407311431*</span>
          <button aria-label="关闭图形"><Close s={8} tone="#a9b0bb" sw={2} /></button>
        </ActiveTab>
        <StripButton $w={34} aria-label="新图形"><Plus /></StripButton>
        <Slash />
      </DocumentTabs>

      <Work>
        <Palette>
          <PaletteTitle><Grip cols={2} rows={4} />特性</PaletteTitle>
          <SelectionBar>
            <SelectBox $h={23}>
              <select aria-label="选择"><option>无选择</option></select>
              <Caret $size={4} />
            </SelectBox>
            <button aria-label="切换 PICKADD"><AddSelIcon /></button>
            <button aria-label="选择对象"><PickIcon /></button>
            <button aria-label="快速选择"><QuickSelIcon /></button>
          </SelectionBar>
          {groups.map((g) => <PropGroup key={g.name} {...g} />)}
        </Palette>

        <Right>
          <Canvas>
            <Plan />
            <ViewBar>
              <span>[−][俯视][二维线框]</span>
              <ViewButtons>
                <ToolButton $w={12} aria-label="最小化视口"><Icon w={12} h={12}><path d="M1 8h10v3H1z" fill="#eee" /></Icon></ToolButton>
                <ToolButton $w={12} aria-label="还原视口"><Icon w={12} h={12}><path d="M4 3V1h7v8H9" stroke="#eee" /><path d="M2 4h7v7H2z" stroke="#eee" strokeWidth="2" /></Icon></ToolButton>
                <ToolButton $w={12} aria-label="关闭视口"><Close s={9} tone="#eee" sw={2} /></ToolButton>
              </ViewButtons>
            </ViewBar>
            <ViewCube />
          </Canvas>
          <Command>
            <CommandSide>
              <Grip cols={6} rows={2} />
              <button aria-label="关闭命令行"><Close s={10} tone="#ddd" sw={2} /></button>
              <button aria-label="自定义命令行"><WrenchIcon /></button>
            </CommandSide>
            <div>
              <History>{"命令:\n自动保存到 C:\\Users\\ADMINI~1\\AppData\\Local\\Temp\\阿荣旗 -207车间气源管-202407311431_1_21763_7954450f.sv$ ...\n命令:"}</History>
              <Prompt>
                <PromptIcon />
                <Caret $size={4} />
                <input placeholder="键入命令" aria-label="命令" />
              </Prompt>
            </div>
          </Command>
        </Right>
      </Work>

      <Status>
        <LayoutTabs>
          <MenuButton $w={41} aria-label="布局菜单"><Burger /></MenuButton>
          <ActiveTab $pad="0 17px"><span>模型</span></ActiveTab>
          <StripButton $w={46}>布局1</StripButton>
          <Slash />
          <StripButton $w={34} aria-label="新建布局"><Plus /></StripButton>
          <Slash />
        </LayoutTabs>
        <StatusTools>
          <ToolGroup><StatusButton $w={27}>模型</StatusButton></ToolGroup>
          {statusGroups.map((g, i) => <ToolGroup key={i}>{g.map((t) => <StatusTool key={t.id} {...t} />)}</ToolGroup>)}
          <ToolGroup>
            <StatusTool id="anno" label="注释可见性" w={22} on />
            <StatusTool id="auto" label="自动缩放" w={23} />
            <StatusTool id="person" label="注释比例" w={23} />
            <StatusButton $w={33}>1:1<Caret $size={4} /></StatusButton>
          </ToolGroup>
          <ToolGroup>
            <StatusTool id="gear" label="切换工作空间" w={24} menu={16} />
            <StatusTool id="plus" label="注释监视器" w={24} />
          </ToolGroup>
          <StatusTool id="shapes" label="隔离对象" w={24} />
          <ToolGroup>
            <StatusTool id="monitor" label="硬件加速" w={24} />
            <StatusTool id="graph" label="性能" w={24} />
          </ToolGroup>
          <StatusTool id="full" label="全屏显示" w={24} />
          <StatusTool id="burger" label="自定义" w={26} />
        </StatusTools>
      </Status>
    </Screen>
  );
}
